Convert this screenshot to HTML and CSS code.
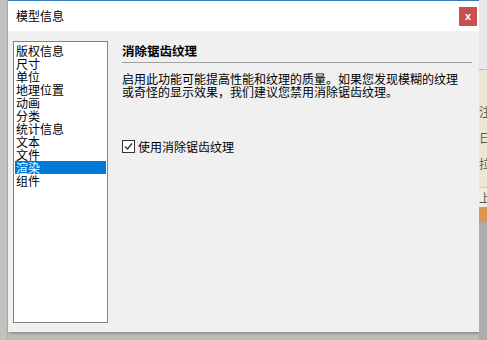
FILE: index.html
```html
<!DOCTYPE html>
<html lang="zh-CN">
<head>
	<meta charset="UTF-8">
	<title>模型信息</title>
	<link rel="stylesheet" href="styles.css">
</head>
<body>
	<div class="screen">
		<div class="side-left"></div>
		<div class="dialog">
			<div class="titlebar">
				<span class="title">模型信息</span>
				<span class="close">x</span>
			</div>
			<div class="body">
				<ul class="list">
					<li>版权信息</li>
					<li>尺寸</li>
					<li>单位</li>
					<li>地理位置</li>
					<li>动画</li>
					<li>分类</li>
					<li>统计信息</li>
					<li>文本</li>
					<li>文件</li>
					<li class="selected">渲染</li>
					<li>组件</li>
				</ul>
				<div class="content">
					<h2 class="heading">消除锯齿纹理</h2>
					<p class="desc">启用此功能可能提高性能和纹理的质量。如果您发现模糊的纹理<br>或奇怪的显示效果，我们建议您禁用消除锯齿纹理。</p>
					<label class="check">
						<span class="box">
							<svg width="11" height="11" viewBox="0 0 11 11"><path d="M2 5.5 L4.5 8 L9 2.5" fill="none" stroke="#333" stroke-width="1.3"/></svg>
						</span>
						使用消除锯齿纹理
					</label>
				</div>
			</div>
		</div>
		<div class="side-right">
			<div class="app-top"></div>
			<div class="app-panel">
				<span>注</span>
				<span>日</span>
				<span>拉</span>
			</div>
			<div class="app-row">上</div>
			<div class="app-bar"></div>
		</div>
	</div>
</body>
</html>
```
FILE: styles.css
```css
* {
	margin: 0;
	padding: 0;
	box-sizing: border-box;
}
body {
	background-color: #bcbcb8;
	font-family: "Noto Sans CJK SC", "Liberation Sans", sans-serif;
	font-size: 12px;
	color: #000;
}
.screen {
	display: flex;
	width: 487px;
	height: 340px;
}
.side-left {
	width: 8px;
	height: 340px;
	background-color: #c2c2be;
	border-right: 1px solid #b2b2ae;
}
.dialog {
	width: 471px;
	height: 332px;
	display: flex;
	flex-direction: column;
	border-top: 1px solid #3a7cbf;
	background-color: #f0f0f0;
	box-shadow: 1px 1px 3px rgba(0, 0, 0, 0.35);
}
.titlebar {
	height: 30px;
	display: flex;
	align-items: center;
	justify-content: space-between;
	padding: 0 2px 0 8px;
	background-color: #fff;
}
.title {
	font-size: 12px;
	line-height: 14px;
}
.close {
	width: 18px;
	height: 19px;
	background-color: #c75050;
	color: #fff;
	font-family: "Liberation Sans", sans-serif;
	font-weight: bold;
	font-size: 11px;
	line-height: 18px;
	text-align: center;
}
.body {
	flex: 1;
	display: flex;
	padding: 10px 7px 9px 5px;
}
.list {
	width: 95px;
	border: 1px solid #838383;
	background-color: #fff;
	padding: 2px 1px;
	list-style-type: none;
}
.list li {
	height: 13px;
	line-height: 13px;
	padding-left: 1px;
	white-space: nowrap;
}
.list li.selected {
	background-color: #0078d7;
	color: #fff;
}
.content {
	flex: 1;
	margin-left: 14px;
}
.heading {
	font-size: 12.5px;
	font-weight: bold;
	line-height: 14px;
	padding-top: 3px;
	padding-bottom: 4px;
	border-bottom: 1px solid #a0a0a0;
}
.desc {
	margin-top: 9px;
	line-height: 13px;
	white-space: nowrap;
}
.check {
	display: flex;
	align-items: center;
	margin-top: 42px;
	line-height: 13px;
}
.box {
	width: 13px;
	height: 13px;
	border: 1px solid #333;
	background-color: #fff;
	margin-right: 3px;
	display: flex;
	align-items: center;
	justify-content: center;
}
.side-right {
	width: 8px;
	display: flex;
	flex-direction: column;
	background-color: #acacaa;
	overflow: hidden;
}
.app-top {
	height: 70px;
	background-color: #e8e8e8;
	border-bottom: 1px solid #b8b8b8;
}
.app-panel {
	height: 117px;
	display: flex;
	flex-direction: column;
	padding-top: 35px;
	gap: 13px;
	background-color: #efe6d8;
	color: #555;
	font-size: 12px;
	line-height: 13px;
}
.app-row {
	height: 20px;
	background-color: #f0ece4;
	color: #555;
	line-height: 20px;
	border-top: 1px solid #d8c8a8;
}
.app-bar {
	height: 15px;
	background-color: #dc9650;
}
```
